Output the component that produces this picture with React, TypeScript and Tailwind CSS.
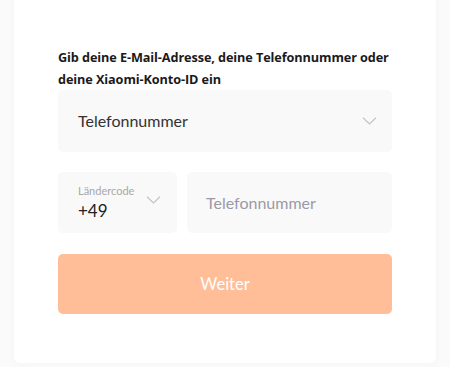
import React from 'react';

function Chevron({ className }: { className?: string }) {
    return (
        <svg className={className} width="15" height="8" viewBox="0 0 15 8" fill="none">
            <path d="M1 0.8 L7.5 7 L14 0.8" stroke="#c4c4c4" strokeWidth="1.2" />
        </svg>
    );
}

export default function App() {
    return (
        <div className="min-h-[367px] bg-[#fafafa] px-[14px] pb-[4px] font-['Lato','Open_Sans',sans-serif]">
            <div className="w-[422px] bg-white rounded-b-md shadow-[0_0_10px_rgba(0,0,0,0.03)] pt-[46px] px-[44px] pb-[49px]">
                <p className="font-['Open_Sans','Noto_Sans',sans-serif] text-[12.7px] font-bold leading-[22px] text-[#1a1a1a] tracking-[-0.1px]">
                    Gib deine E-Mail-Adresse, deine Telefonnummer oder deine Xiaomi-Konto-ID ein
                </p>

                <div className="h-[62px] bg-[#f9f9f9] rounded-[5px] flex items-center justify-between pl-[20px] pr-[15px]">
                    <span className="text-[16px] text-[#333]">Telefonnummer</span>
                    <Chevron />
                </div>

                <div className="flex gap-[10px] mt-[20px]">
                    <div className="w-[119px] h-[61px] bg-[#f9f9f9] rounded-[5px] flex items-center justify-between pl-[20px] pr-[16px]">
                        <div className="flex flex-col pt-[2px]">
                            <span className="text-[11px] leading-[14px] text-[#a8a8a8]">Ländercode</span>
                            <span className="text-[17px] leading-[25px] text-[#222]">+49</span>
                        </div>
                        <Chevron className="mb-[6px]" />
                    </div>
                    <div className="flex-1 h-[61px] bg-[#f9f9f9] rounded-[5px] flex items-center pl-[19px]">
                        <span className="text-[16px] text-[#9a9aa6]">Telefonnummer</span>
                    </div>
                </div>

                <button className="w-full h-[60px] mt-[21px] bg-[#ffbe98] rounded-[5px] text-white text-[16.5px]">
                    Weiter
                </button>
            </div>
        </div>
    );
}
